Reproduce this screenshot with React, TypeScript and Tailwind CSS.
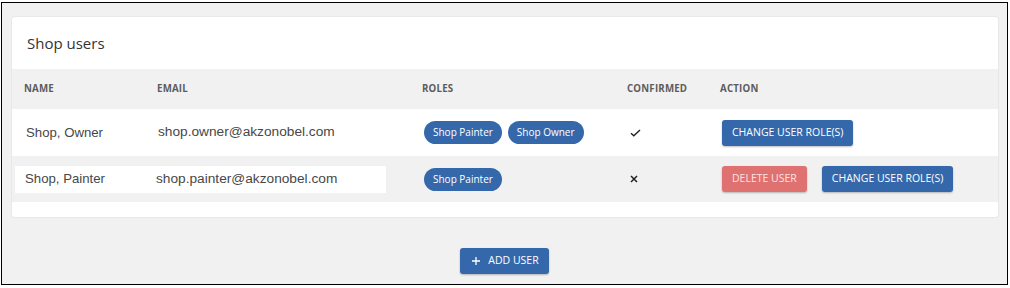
import React from "react";

const BLUE = "bg-[#3568ab]";

function Pill({ children }: { children: React.ReactNode }) {
  return (
    <span className={`inline-flex h-[23px] items-center rounded-full ${BLUE} px-[9px] text-[10px] text-white`}>
      {children}
    </span>
  );
}

function Btn({ children, red }: { children: React.ReactNode; red?: boolean }) {
  return (
    <button
      className={`flex h-[26px] items-center rounded-[3px] px-[10px] text-[10.5px] uppercase shadow-[0_1px_2px_rgba(0,0,0,0.25)] ${
        red ? "bg-[#e07171] text-[#fbe3e3]" : `${BLUE} text-white`
      }`}
    >
      {children}
    </button>
  );
}

function Check() {
  return (
    <svg width="11" height="8" viewBox="0 0 11 8" fill="none">
      <path d="M1 4.2 L3.8 6.8 L10 1" stroke="#222" strokeWidth="1.4" />
    </svg>
  );
}

function Cross() {
  return (
    <svg width="8" height="8" viewBox="0 0 8 8" fill="none">
      <path d="M1 1 L7 7 M7 1 L1 7" stroke="#222" strokeWidth="1.5" />
    </svg>
  );
}

export default function App() {
  const sans = { fontFamily: '"Open Sans", "Noto Sans", sans-serif' };
  const arial = { fontFamily: '"Liberation Sans", Arial, sans-serif' };
  return (
    <div className="h-[288px] w-[1010px] bg-white pl-[1px] pt-[2px]" style={sans}>
      <div className="flex h-[283px] w-[1007px] flex-col border border-black bg-[#f1f1f1] pl-[10px] pt-[14px]">
        <div className="flex h-[200px] w-[986px] flex-col rounded-[3px] bg-white shadow-[0_0_0_1px_#e8e8e8]">
          <div className="flex h-[52px] items-center pl-[15px] text-[15px] text-[#333]">Shop users</div>
          <div className="flex h-[40px] items-center bg-[#f1f1f1] pl-[12px] text-[9.7px] font-bold tracking-[0.2px] text-[#5c5c5c]">
            <div className="w-[133px]">NAME</div>
            <div className="w-[265px]">EMAIL</div>
            <div className="w-[205px]">ROLES</div>
            <div className="w-[93px]">CONFIRMED</div>
            <div>ACTION</div>
          </div>
          <div className="flex h-[47px] items-center bg-white text-[13.2px] text-[#474747]" style={arial}>
            <div className="w-[145px] pl-[14px]">Shop, Owner</div>
            <div className="w-[265px] pl-[1px] text-[13.7px]">shop.owner@akzonobel.com</div>
            <div className="flex w-[205px] gap-[6px] pl-[2px]" style={sans}>
              <Pill>Shop Painter</Pill>
              <Pill>Shop Owner</Pill>
            </div>
            <div className="w-[95px] pl-[3px]">
              <Check />
            </div>
            <div className="flex" style={sans}>
              <Btn>Change user role(s)</Btn>
            </div>
          </div>
          <div className="flex h-[46px] items-center bg-[#f1f1f1] pl-[3px] text-[13.2px] text-[#474747]" style={arial}>
            <div className="flex h-[27px] w-[371px] items-center bg-white">
              <div className="w-[141px] pl-[10px]">Shop, Painter</div>
              <div className="text-[13.7px]">shop.painter@akzonobel.com</div>
            </div>
            <div className="flex w-[241px] pl-[38px]" style={sans}>
              <Pill>Shop Painter</Pill>
            </div>
            <div className="w-[95px] pl-[3px]">
              <Cross />
            </div>
            <div className="flex gap-[15px]" style={sans}>
              <Btn red>Delete user</Btn>
              <Btn>Change user role(s)</Btn>
            </div>
          </div>
        </div>
        <div className="mt-[31px] flex justify-center pr-[10px]">
          <button className={`flex h-[26px] items-center gap-[8px] rounded-[3px] ${BLUE} pl-[12px] pr-[10px] text-[10.5px] text-white shadow-[0_1px_2px_rgba(0,0,0,0.25)]`}>
            <svg width="8" height="8" viewBox="0 0 8 8">
              <path d="M4 0 V8 M0 4 H8" stroke="white" strokeWidth="1.3" />
            </svg>
            ADD USER
          </button>
        </div>
      </div>
    </div>
  );
}
